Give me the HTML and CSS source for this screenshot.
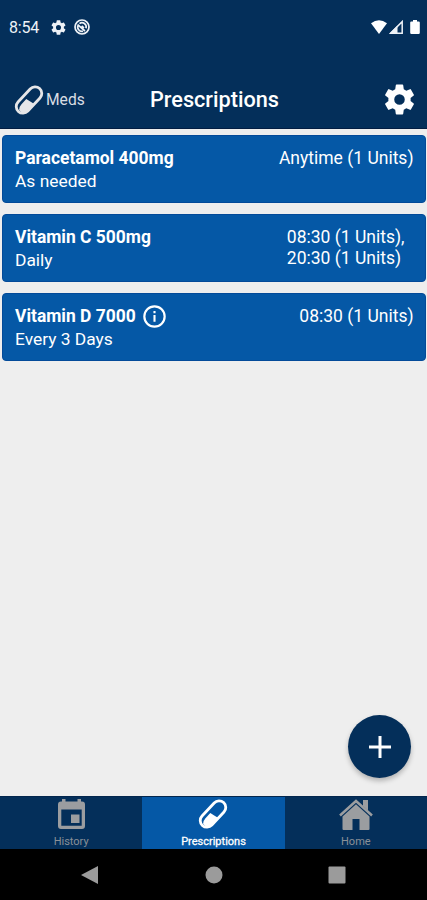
FILE: index.html
```html
<!DOCTYPE html>
<html lang="en">
<head>
<meta charset="utf-8">
<title>Prescriptions</title>
<link rel="stylesheet" href="styles.css">
</head>
<body>
<svg width="0" height="0" class="defs">
  <symbol id="pill" viewBox="0 0 30 30">
    <g transform="rotate(-47 15 15)">
      <rect x="-0.6" y="8.300" width="31.200" height="13.400" rx="6.700" fill="none" stroke="currentColor" stroke-width="2.800"/>
      <path d="M13.800 12.400H6.500Q3 12.400 1 14.500V20l5 2h9.800z" fill="currentColor"/>
    </g>
  </symbol>
  <symbol id="gear" viewBox="2 2 20 20">
    <path fill="currentColor" d="M19.14 12.94c.04-.3.06-.61.06-.94s-.02-.64-.07-.94l2.03-1.58a.49.49 0 0 0 .12-.61l-1.92-3.32a.49.49 0 0 0-.59-.22l-2.39.96a7 7 0 0 0-1.62-.94l-.36-2.54a.48.48 0 0 0-.48-.41h-3.84a.47.47 0 0 0-.47.41l-.36 2.54c-.59.24-1.13.57-1.62.94l-2.39-.96a.48.48 0 0 0-.59.22L2.74 8.87a.47.47 0 0 0 .12.61l2.03 1.58c-.05.3-.09.63-.09.94s.02.64.07.94l-2.03 1.58a.49.49 0 0 0-.12.61l1.92 3.32c.12.22.37.29.59.22l2.39-.96c.5.38 1.03.7 1.62.94l.36 2.54c.05.24.24.41.48.41h3.84c.24 0 .44-.17.47-.41l.36-2.54a7 7 0 0 0 1.62-.94l2.39.96c.22.08.47 0 .59-.22l1.92-3.32a.47.47 0 0 0-.12-.61zM12 15.4a3.4 3.4 0 1 1 0-6.8 3.4 3.4 0 0 1 0 6.8z"/>
  </symbol>
</svg>
<div class="screen">
  <div class="status">
    <span class="clock">8:54</span>
    <svg class="status-gear"><use href="#gear"/></svg>
    <svg class="status-disc" viewBox="0 0 16 16" fill="none" stroke="currentColor"><circle cx="8" cy="8" r="7" stroke-width="1.7"/><path d="M9 12.200A4.200 4.200 0 0 1 4.200 6.200l6.800 5.800M5.500 4.600A4.200 4.200 0 0 1 12 9.200M7.600 7l2.400 2" stroke-width="1.7"/></svg>
    <span class="spacer"></span>
    <svg class="wifi" viewBox="0 0 16 14"><path fill="currentColor" d="M0 3.200Q8-2.900 16 3.200L8 14z"/></svg>
    <svg class="signal" viewBox="0 0 14 14"><path d="M13.200 1.600v11.600H1.600z" fill="none" stroke="currentColor" stroke-width="1.500"/><path fill="currentColor" d="M8.500 5.500V13H1z"/></svg>
    <svg class="battery" viewBox="0 0 10 14"><path fill="currentColor" d="M3 0h4v1.400h1.600q1.200 0 1.200 1.200v10.200q0 1.200-1.200 1.200H1.400Q.2 14 .2 12.800V2.600q0-1.200 1.200-1.200H3z"/></svg>
  </div>
  <header class="header">
    <div class="back"><svg class="pill"><use href="#pill"/></svg><span>Meds</span></div>
    <h1>Prescriptions</h1>
    <div class="settings"><svg><use href="#gear"/></svg></div>
  </header>
  <main class="list">
    <section class="card">
      <div><h2>Paracetamol 400mg</h2><p>As needed</p></div>
      <div class="dose">Anytime (1 Units)</div>
    </section>
    <section class="card">
      <div><h2>Vitamin C 500mg</h2><p>Daily</p></div>
      <div class="dose dose-many">08:30 (1 Units),<br>20:30 (1 Units)</div>
    </section>
    <section class="card">
      <div><h2>Vitamin D 7000<svg class="info" viewBox="0 0 24 24"><circle cx="12" cy="12" r="10.600" fill="none" stroke="currentColor" stroke-width="2.300"/><path fill="currentColor" d="M10.900 6.200h2.200v2.300h-2.200zM10.900 10.400h2.200v7.200h-2.200z"/></svg></h2><p>Every 3 Days</p></div>
      <div class="dose">08:30 (1 Units)</div>
    </section>
    <div class="fab"><svg viewBox="0 0 22 22"><path d="M11 0v22M0 11h22" stroke="currentColor" stroke-width="3"/></svg></div>
  </main>
  <nav class="tabs">
    <div class="tab"><svg class="calendar" viewBox="0 0 27 30"><path fill="currentColor" fill-rule="evenodd" d="M4 0h3.500v2.500h12V0H23v2.500h1q3 0 3 3V27q0 3-3 3H3q-3 0-3-3V5.500q0-3 3-3h1zM3.300 10.500v16.200h20.400V10.500z"/><path fill="currentColor" d="M13 15.500h8.500V24H13z"/></svg><span>History</span></div>
    <div class="tab active"><svg class="pill"><use href="#pill"/></svg><span>Prescriptions</span></div>
    <div class="tab"><svg class="house" viewBox="0 0 34 31"><path d="M1 16.500 17 2l16 14.500" fill="none" stroke="currentColor" stroke-width="2.500"/><path fill="currentColor" d="M24 1h5v10.500l-5-4.500zM17 5.300 30.500 17.500V30q0 1-1 1H20.500V20h-7v11H4.500q-1 0-1-1V17.500z"/></svg><span>Home</span></div>
  </nav>
  <div class="sysnav">
    <svg viewBox="0 0 18 18"><path fill="currentColor" d="M17 0v18L0 9z"/></svg>
    <svg viewBox="0 0 18 18"><circle cx="9" cy="9" r="8.500" fill="currentColor"/></svg>
    <svg viewBox="0 0 18 18"><rect x=".5" y=".5" width="17" height="17" rx="1" fill="currentColor"/></svg>
  </div>
</div>
</body>
</html>
```
FILE: styles.css
```css
* { box-sizing: border-box; }
body { margin: 0; font-family: Roboto, sans-serif; color: #fff; }
h1, h2, p { margin: 0; }
svg { display: block; flex: none; }
.defs { position: absolute; }
.screen { width: 427px; height: 900px; display: flex; flex-direction: column; background: #eee; }
.status { height: 71px; padding: 0 7px 17px 9px; display: flex; align-items: center; background: #042f5a; color: #eef2f7; }
.clock { font-size: 16px; width: 42px; letter-spacing: -.2px; padding-top: 1px; }
.status-gear { width: 15px; height: 15px; margin-right: 8px; }
.status-disc { width: 16px; height: 16px; }
.spacer { flex: 1; }
.wifi { width: 16px; height: 14px; margin-right: 2px; color: #fff; }
.signal { width: 14px; height: 14px; margin-right: 7px; }
.battery { width: 10px; height: 14px; color: #fff; }
.header { height: 58px; display: grid; grid-template-columns: 1fr auto 1fr; align-items: center; padding: 0 12px 0 14px; background: #042f5a; border-bottom: 1px solid #021d42; }
.back { display: flex; align-items: center; gap: 2px; font-size: 15.6px; color: #d9dde3; }
.pill { width: 30px; height: 30px; }
.header .pill { color: #e6e6e8; }
h1 { font-size: 21.7px; font-weight: 500; line-height: 24px; padding-top: 1px; }
.settings { justify-self: end; }
.settings svg { width: 31px; height: 31px; }
.list { flex: 1; display: flex; flex-direction: column; gap: 11px; padding: 5.5px 1px 0 2px; }
.card { height: 68px; display: flex; justify-content: space-between; background: #0558a6; border: 1px solid #034a99; border-radius: 4px; padding: 10.5px 11.5px 0 12px; }
h2 { display: flex; align-items: center; gap: 7px; font-size: 17.45px; font-weight: 700; line-height: 24px; height: 24px; }
.card p { font-size: 17.4px; line-height: 23px; }
.info { width: 23px; height: 23px; margin-top: 1px; }
.dose { font-size: 17.5px; line-height: 24px; }
.dose-many { line-height: 21px; padding: 2px 9px 0 0; }
.fab { margin: auto 15px 18px auto; width: 63px; height: 63px; border-radius: 50%; background: #042f5a; display: grid; place-items: center; box-shadow: 0 3px 5px rgba(0,0,0,.25); }
.fab svg { width: 22px; height: 22px; }
.tabs { height: 53px; display: grid; grid-template-columns: repeat(3, 1fr); background: #042f5a; color: #9b9da0; }
.tab { display: flex; flex-direction: column; align-items: center; justify-content: space-between; padding: 2px 0 1px; border-top: 1px solid #03264d; font-size: 11px; line-height: 13px; }
.tab span { color: #8a9097; }
.active { background: #0558a6; }
.tab.active { color: #fff; }
.tab.active span { color: #fff; -webkit-text-stroke: .3px #fff; }
.calendar { width: 27px; height: 30px; }
.house { width: 34px; height: 31px; }
.sysnav { height: 51px; background: #000; color: #9b9b9b; display: flex; justify-content: space-between; align-items: center; padding: 0 81px; }
.sysnav svg { width: 18px; height: 18px; }
```
